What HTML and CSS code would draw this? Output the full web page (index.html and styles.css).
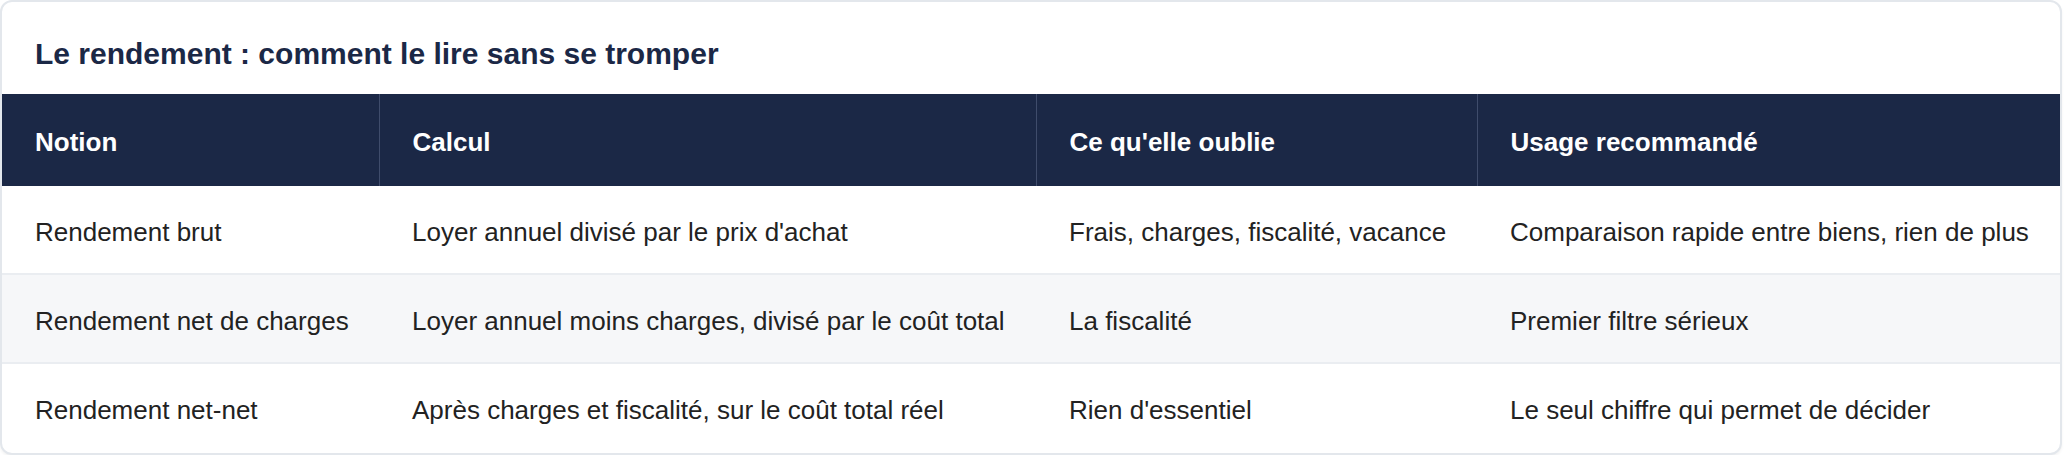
FILE: index.html
```html
<!DOCTYPE html>
<html lang="fr">
<head>
<meta charset="utf-8">
<title>Le rendement</title>
<link rel="stylesheet" href="styles.css">
</head>
<body>
<section class="card">
  <h2 class="card-title">Le rendement : comment le lire sans se tromper</h2>
  <table class="data-table">
    <colgroup>
      <col class="col-1">
      <col class="col-2">
      <col class="col-3">
      <col class="col-4">
    </colgroup>
    <thead>
      <tr>
        <th>Notion</th>
        <th>Calcul</th>
        <th>Ce qu'elle oublie</th>
        <th>Usage recommandé</th>
      </tr>
    </thead>
    <tbody>
      <tr>
        <td>Rendement brut</td>
        <td>Loyer annuel divisé par le prix d'achat</td>
        <td>Frais, charges, fiscalité, vacance</td>
        <td>Comparaison rapide entre biens, rien de plus</td>
      </tr>
      <tr class="alt">
        <td>Rendement net de charges</td>
        <td>Loyer annuel moins charges, divisé par le coût total</td>
        <td>La fiscalité</td>
        <td>Premier filtre sérieux</td>
      </tr>
      <tr>
        <td>Rendement net-net</td>
        <td>Après charges et fiscalité, sur le coût total réel</td>
        <td>Rien d'essentiel</td>
        <td>Le seul chiffre qui permet de décider</td>
      </tr>
    </tbody>
  </table>
</section>
</body>
</html>
```

FILE: styles.css
```css
html, body {
  margin: 0;
  padding: 0;
  background: #ffffff;
}

body {
  font-family: "Liberation Sans", Arial, Helvetica, sans-serif;
}

.card {
  width: 2062px;
  box-sizing: border-box;
  border: 2px solid #e3e7ec;
  border-radius: 12px;
  overflow: hidden;
  background: #ffffff;
  box-shadow: 0 2px 3px rgba(0, 0, 0, 0.05);
}

.card-title {
  margin: 0;
  padding: 34px 33px 22px;
  font-size: 30px;
  line-height: 36px;
  font-weight: 700;
  color: #1b2846;
}

.data-table {
  width: 100%;
  border-collapse: collapse;
  table-layout: fixed;
  font-size: 26px;
  line-height: 36px;
}

.col-1 { width: 377px; }
.col-2 { width: 657px; }
.col-3 { width: 441px; }
.col-4 { width: auto; }

.data-table th {
  background: #1b2846;
  color: #ffffff;
  font-weight: 700;
  text-align: left;
  padding: 30px 33px 26px;
  border-right: 1px solid #3f4c6b;
}

.data-table th:last-child {
  border-right: none;
}

.data-table td {
  color: #222222;
  padding: 28px 33px 23px;
  border-bottom: 2px solid #eaedf1;
  white-space: nowrap;
}

.data-table tbody tr:last-child td {
  border-bottom: none;
  padding-bottom: 25px;
}

.data-table tr.alt td {
  background: #f6f7f9;
}
```
